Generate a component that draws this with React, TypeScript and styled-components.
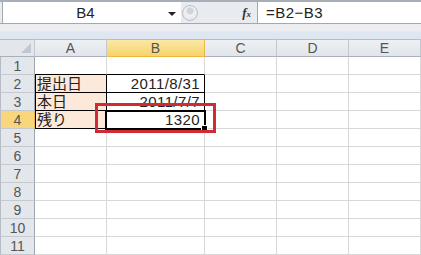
import React from 'react';
import styled, { createGlobalStyle } from 'styled-components';

const GlobalStyle = createGlobalStyle`
    html, body {
        margin:0;
        padding:0;
        background:#fff;
        overflow:hidden;
    }
    body {
        font-family:"Liberation Sans", "Noto Sans CJK JP", sans-serif;
    }
`

const COLS = ['A', 'B', 'C', 'D', 'E'];
const ROW_COUNT = 11;

type CellData = { text: string; align?: 'left' | 'right'; fill?: boolean; boxed?: boolean };

const data: Record<string, CellData> = {
    A2: { text: '提出日', fill: true, boxed: true },
    B2: { text: '2011/8/31', align: 'right', boxed: true },
    A3: { text: '本日', fill: true, boxed: true },
    B3: { text: '2011/7/7', align: 'right', boxed: true },
    A4: { text: '残り', fill: true, boxed: true },
    B4: { text: '1320', align: 'right', boxed: true },
};

const App: React.FC = () => {
    const rows = Array.from({ length: ROW_COUNT }, (_, i) => i + 1);

    return(
        <Window>
            <GlobalStyle />
            <FormulaBar>
                <NameBox>
                    <NameText>B4</NameText>
                    <DropArrow />
                </NameBox>
                <Controls>
                    <RoundButton />
                    <Fx>f<sub>x</sub></Fx>
                </Controls>
                <FormulaInput>=B2−B3</FormulaInput>
            </FormulaBar>
            <Band />
            <SheetWrap>
                <Sheet>
                    <Corner><CornerMark /></Corner>
                    {COLS.map(c => (
                        <ColHeader key={c} $active={c === 'B'}>{c}</ColHeader>
                    ))}
                    {rows.map(r => (
                        <React.Fragment key={r}>
                            <RowHeader $active={r === 4}>{r}</RowHeader>
                            {COLS.map(c => {
                                const id = `${c}${r}`;
                                const cell = data[id];
                                const below = data[`${c}${r + 1}`];
                                return (
                                    <Cell
                                        key={id}
                                        $align={cell?.align ?? 'left'}
                                        $fill={!!cell?.fill}
                                        $boxed={!!cell?.boxed}
                                        $topOfBox={!cell && !!below?.boxed}
                                        $leftEdge={!!cell?.boxed && c === 'A'}
                                    >
                                        {cell?.text}
                                    </Cell>
                                );
                            })}
                        </React.Fragment>
                    ))}
                </Sheet>
                <Selection>
                    <FillHandle />
                </Selection>
                <Callout />
            </SheetWrap>
        </Window>
    )
}

export default App;

const Window = styled.div`
    width:421px;
    height:255px;
    overflow:hidden;
    background:#fff;
    display:flex;
    flex-direction:column;
`

const FormulaBar = styled.div`
    height:25px;
    box-sizing:border-box;
    border-top:2px solid #a7aeb8;
    border-bottom:1px solid #a3a8ae;
    padding-left:2px;
    background:#e8ebef;
    display:flex;
`

const NameBox = styled.div`
    width:178px;
    background:#fff;
    border-left:1px solid #a3a8ae;
    display:flex;
    align-items:center;
`

const NameText = styled.div`
    flex:1;
    text-align:center;
    font-size:15px;
    color:#222;
`

const DropArrow = styled.div`
    width:0;
    height:0;
    margin-right:5px;
    border-left:4px solid transparent;
    border-right:4px solid transparent;
    border-top:4px solid #222;
    margin-top:2px;
`

const Controls = styled.div`
    width:76px;
    display:flex;
    align-items:center;
    justify-content:space-between;
    padding-right:6px;
    box-sizing:border-box;
`

const RoundButton = styled.div`
    width:16px;
    height:16px;
    margin-left:1px;
    border-radius:50%;
    border:1px solid #b9bec6;
    box-sizing:border-box;
    background:radial-gradient(circle at 50% 35%, #d0d4da 0 3px, #eef0f3 4px, #e2e5e9 100%);
`

const Fx = styled.div`
    font-family:"Liberation Serif", serif;
    font-style:italic;
    font-weight:bold;
    font-size:13px;
    color:#333;
    sub {
        font-size:9px;
        vertical-align:baseline;
    }
`

const FormulaInput = styled.div`
    flex:1;
    background:#fff;
    border-left:1px solid #a3a8ae;
    padding-left:8px;
    display:flex;
    align-items:center;
    font-size:15px;
    letter-spacing:0.5px;
    color:#222;
`

const Band = styled.div`
    height:15px;
    background:linear-gradient(#eceef1 0, #eceef1 45%, #dfe7f1 55%, #dce5f0 100%);
`

const SheetWrap = styled.div`
    position:relative;
    flex:1;
`

const Sheet = styled.div`
    display:grid;
    grid-template-columns:35px 72px 98px 72px 72px 72px;
    grid-auto-rows:18px;
    font-size:15px;
`

const Corner = styled.div`
    position:relative;
    background:#e3e6ea;
    border-top:1px solid #b5bcc5;
    border-right:1px solid #c3c8cf;
    border-bottom:1px solid #a9b0b9;
    box-sizing:border-box;
`

const CornerMark = styled.div`
    position:absolute;
    right:3px;
    bottom:3px;
    width:0;
    height:0;
    border-left:10px solid transparent;
    border-bottom:10px solid #c2c7ce;
`

const ColHeader = styled.div<{ $active: boolean }>`
    box-sizing:border-box;
    border-top:1px solid #b5bcc5;
    border-right:1px solid ${({ $active }) => $active ? '#e8b84c' : '#c3c8cf'};
    border-bottom:1px solid ${({ $active }) => $active ? '#f0b73f' : '#a9b0b9'};
    background:${({ $active }) => $active
        ? 'linear-gradient(#fbe8a6, #f7d369)'
        : 'linear-gradient(#eef0f3, #e1e5ea)'};
    color:#555;
    font-size:14px;
    display:flex;
    align-items:center;
    justify-content:center;
`

const RowHeader = styled.div<{ $active: boolean }>`
    box-sizing:border-box;
    border-left:1px solid #b5bcc5;
    border-right:1px solid ${({ $active }) => $active ? '#e8b84c' : '#9ea6b0'};
    border-bottom:1px solid #c5cad1;
    background:${({ $active }) => $active ? '#f9d67c' : '#e3e7ec'};
    color:#555;
    font-size:14px;
    display:flex;
    align-items:center;
    justify-content:center;
`

const Cell = styled.div<{ $align: 'left' | 'right'; $fill: boolean; $boxed: boolean; $topOfBox: boolean; $leftEdge: boolean }>`
    box-sizing:border-box;
    border-right:1px solid ${({ $boxed }) => $boxed ? '#000' : '#d8d8d8'};
    border-bottom:1px solid ${({ $boxed, $topOfBox }) => ($boxed || $topOfBox) ? '#000' : '#d8d8d8'};
    box-shadow:${({ $leftEdge }) => $leftEdge ? 'inset 1px 0 0 #000' : 'none'};
    background:${({ $fill }) => $fill ? '#fde9d9' : '#fff'};
    text-align:${({ $align }) => $align};
    padding:0 ${({ $align }) => $align === 'right' ? '4px' : '0'} 0 ${({ $align }) => $align === 'left' ? '2px' : '0'};
    line-height:18px;
    letter-spacing:${({ $align }) => $align === 'right' ? '0.4px' : '0'};
    color:#222;
    white-space:nowrap;
    overflow:hidden;
`

const Selection = styled.div`
    position:absolute;
    left:105px;
    top:71px;
    width:101px;
    height:20px;
    box-sizing:border-box;
    border:2px solid #000;
    box-shadow:inset 0 0 0 1px #fff;
    pointer-events:none;
`

const FillHandle = styled.div`
    position:absolute;
    right:-4px;
    bottom:-4px;
    width:5px;
    height:5px;
    background:#000;
    border:1px solid #fff;
`

const Callout = styled.div`
    position:absolute;
    left:95px;
    top:64px;
    width:121px;
    height:30px;
    box-sizing:border-box;
    border:3px solid #d02a35;
    pointer-events:none;
`
